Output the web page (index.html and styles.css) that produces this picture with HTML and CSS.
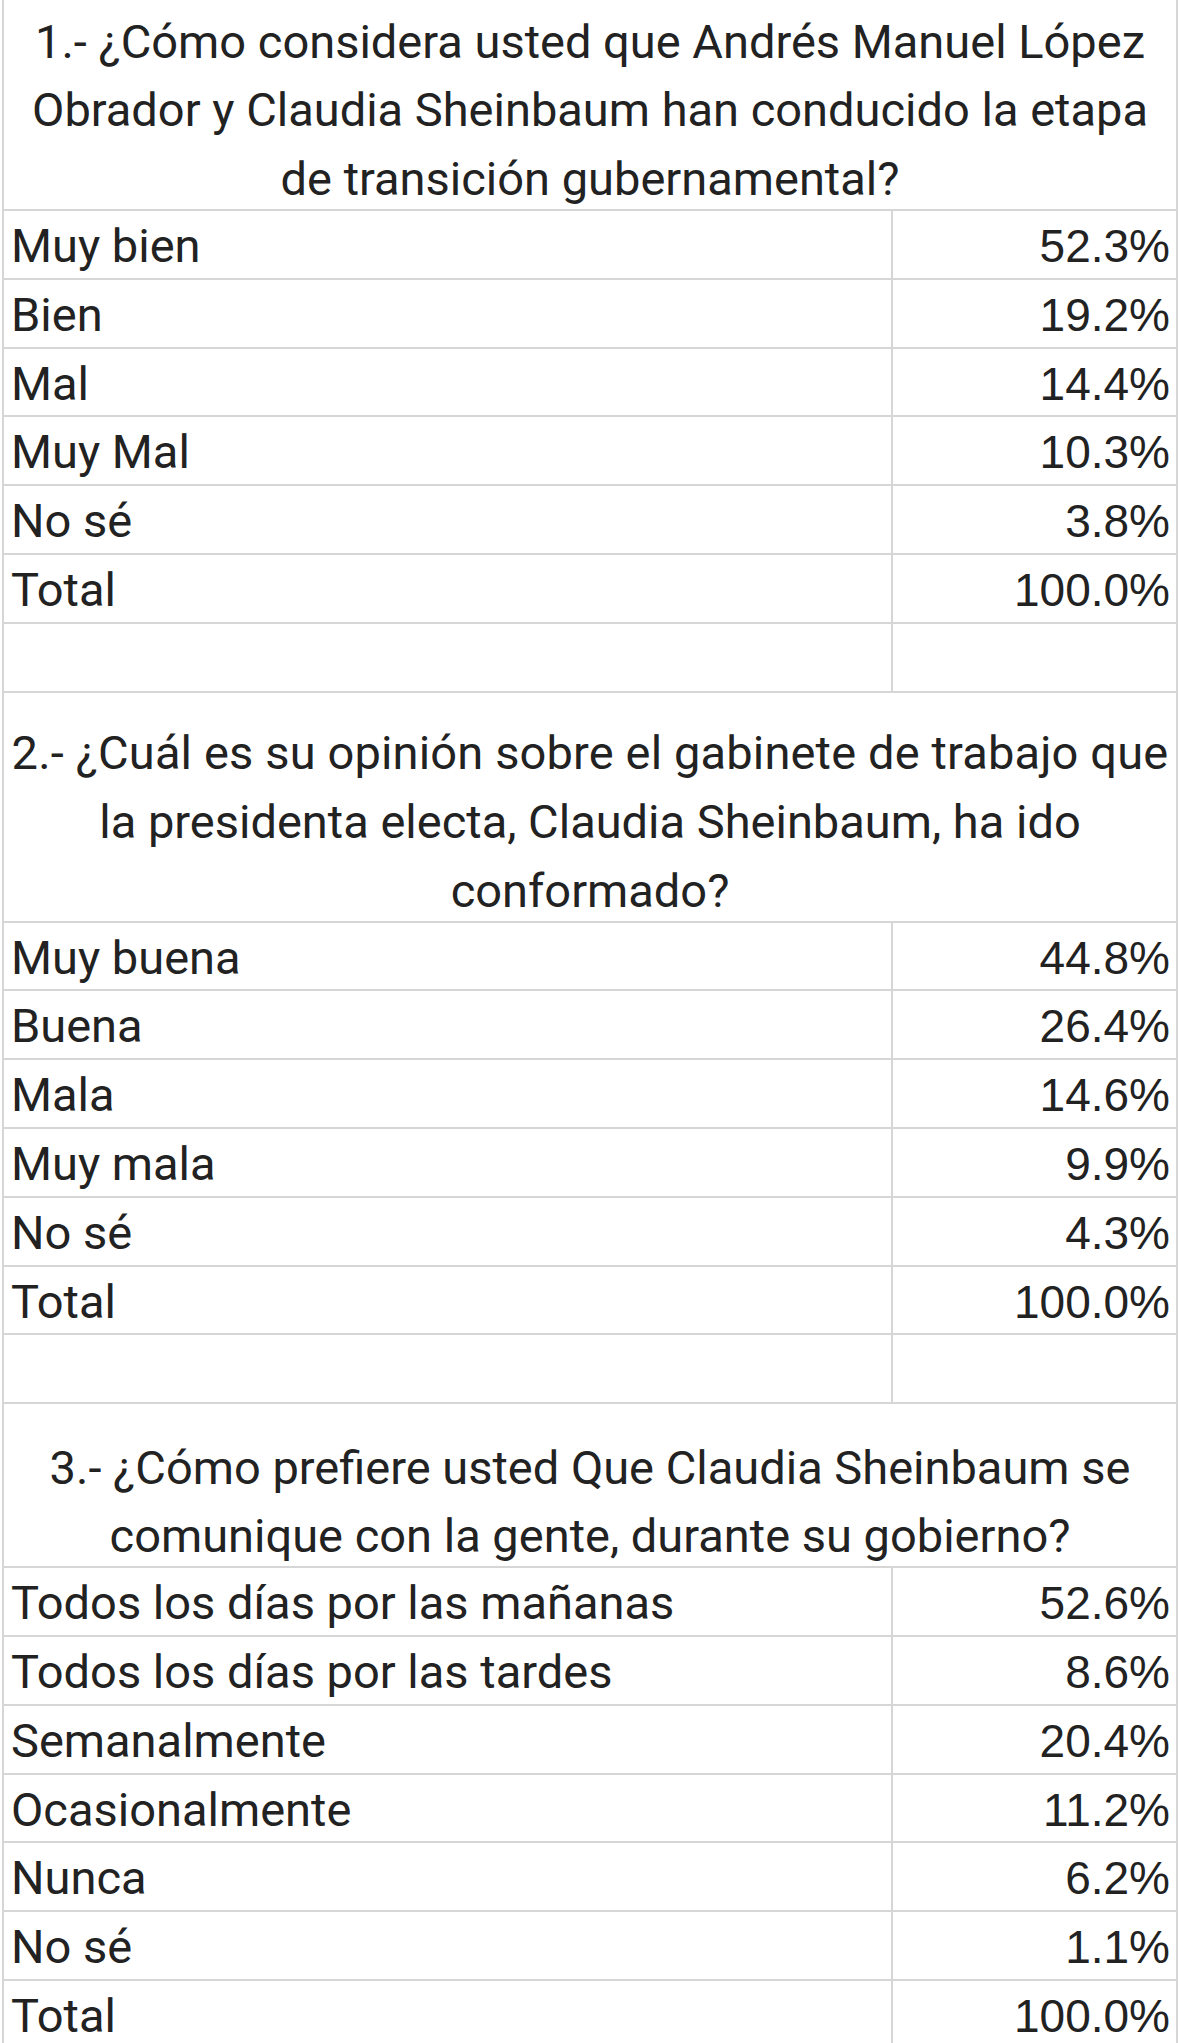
FILE: index.html
```html
<!DOCTYPE html>
<html lang="es">
<head>
<meta charset="utf-8">
<title>Encuesta</title>
<link rel="stylesheet" href="styles.css">
</head>
<body>
<div class="sheet">
  <div class="q q1">
    <span>1.- ¿Cómo considera usted que Andrés Manuel López</span>
    <span>Obrador y Claudia Sheinbaum han conducido la etapa</span>
    <span>de transición gubernamental?</span>
  </div>
  <div class="row"><div class="lbl">Muy bien</div><div class="val">52.3%</div></div>
  <div class="row"><div class="lbl">Bien</div><div class="val">19.2%</div></div>
  <div class="row"><div class="lbl">Mal</div><div class="val">14.4%</div></div>
  <div class="row"><div class="lbl">Muy Mal</div><div class="val">10.3%</div></div>
  <div class="row"><div class="lbl">No sé</div><div class="val">3.8%</div></div>
  <div class="row"><div class="lbl">Total</div><div class="val">100.0%</div></div>
  <div class="row"><div class="lbl"></div><div class="val"></div></div>

  <div class="q q2">
    <span>2.- ¿Cuál es su opinión sobre el gabinete de trabajo que</span>
    <span>la presidenta electa, Claudia Sheinbaum, ha ido</span>
    <span>conformado?</span>
  </div>
  <div class="row"><div class="lbl">Muy buena</div><div class="val">44.8%</div></div>
  <div class="row"><div class="lbl">Buena</div><div class="val">26.4%</div></div>
  <div class="row"><div class="lbl">Mala</div><div class="val">14.6%</div></div>
  <div class="row"><div class="lbl">Muy mala</div><div class="val">9.9%</div></div>
  <div class="row"><div class="lbl">No sé</div><div class="val">4.3%</div></div>
  <div class="row"><div class="lbl">Total</div><div class="val">100.0%</div></div>
  <div class="row"><div class="lbl"></div><div class="val"></div></div>

  <div class="q q3">
    <span>3.- ¿Cómo prefiere usted Que Claudia Sheinbaum se</span>
    <span>comunique con la gente, durante su gobierno?</span>
  </div>
  <div class="row"><div class="lbl">Todos los días por las mañanas</div><div class="val">52.6%</div></div>
  <div class="row"><div class="lbl">Todos los días por las tardes</div><div class="val">8.6%</div></div>
  <div class="row"><div class="lbl">Semanalmente</div><div class="val">20.4%</div></div>
  <div class="row"><div class="lbl">Ocasionalmente</div><div class="val">11.2%</div></div>
  <div class="row"><div class="lbl">Nunca</div><div class="val">6.2%</div></div>
  <div class="row"><div class="lbl">No sé</div><div class="val">1.1%</div></div>
  <div class="row"><div class="lbl">Total</div><div class="val">100.0%</div></div>
</div>
</body>
</html>
```

FILE: styles.css
```css
html, body {
  margin: 0;
  padding: 0;
  background: #ffffff;
}

body {
  overflow: hidden;
}

.sheet {
  box-sizing: border-box;
  margin-left: 2px;
  width: 1176px;
  border-left: 2px solid #d6d6d6;
  border-right: 2px solid #d6d6d6;
  color: #222222;
  font-family: Roboto, "Liberation Sans", sans-serif;
}

.q {
  box-sizing: border-box;
  display: flex;
  flex-direction: column;
  align-items: center;
  justify-content: flex-end;
  border-bottom: 2px solid #d6d6d6;
  font-size: 47px;
  white-space: nowrap;
  overflow: visible;
}

.q span {
  display: block;
  white-space: nowrap;
  padding-top: 10px;
  line-height: 58.8px;
}

.q2 span:first-child {
  letter-spacing: 0.15px;
}

.q1 { height: 211px; }
.q2 { height: 230px; }
.q3 { height: 164px; }

.row {
  box-sizing: border-box;
  display: grid;
  grid-template-columns: 887px 1fr;
  height: 68.8px;
  border-bottom: 2px solid #d6d6d6;
}

.lbl {
  padding-left: 7px;
  font-size: 47px;
  line-height: 66.8px;
  padding-top: 2px;
  white-space: nowrap;
}

.val {
  border-left: 2px solid #d6d6d6;
  padding-right: 6px;
  text-align: right;
  font-family: "Liberation Sans", Arial, sans-serif;
  font-size: 46px;
  line-height: 66.8px;
  padding-top: 2px;
  white-space: nowrap;
}
```
